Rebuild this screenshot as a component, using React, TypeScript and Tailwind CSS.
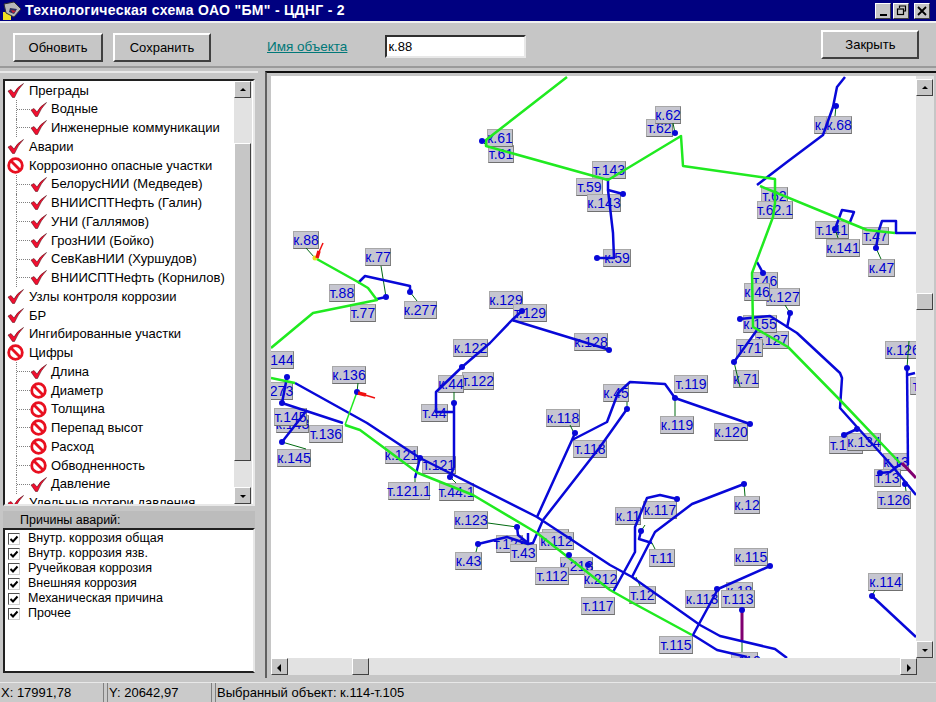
const font = "font-['Liberation_Sans',Arial,sans-serif]";
const raised = "border border-t-white border-l-white border-r-[#404040] border-b-[#404040] bg-[#c6c6c6]";

type TreeRow = { text: string; level: 0 | 1; off?: boolean };

const treeRows: TreeRow[] = [
  { text: "Преграды", level: 0 },
  { text: "Водные", level: 1 },
  { text: "Инженерные коммуникации", level: 1 },
  { text: "Аварии", level: 0 },
  { text: "Коррозионно опасные участки", level: 0, off: true },
  { text: "БелорусНИИ (Медведев)", level: 1 },
  { text: "ВНИИСПТНефть (Галин)", level: 1 },
  { text: "УНИ (Галлямов)", level: 1 },
  { text: "ГрозНИИ (Бойко)", level: 1 },
  { text: "СевКавНИИ (Хуршудов)", level: 1 },
  { text: "ВНИИСПТНефть (Корнилов)", level: 1 },
  { text: "Узлы контроля коррозии", level: 0 },
  { text: "БР", level: 0 },
  { text: "Ингибированные участки", level: 0 },
  { text: "Цифры", level: 0, off: true },
  { text: "Длина", level: 1 },
  { text: "Диаметр", level: 1, off: true },
  { text: "Толщина", level: 1, off: true },
  { text: "Перепад высот", level: 1, off: true },
  { text: "Расход", level: 1, off: true },
  { text: "Обводненность", level: 1, off: true },
  { text: "Давление", level: 1 },
  { text: "Удельные потери давления", level: 0 },
];

const causes = [
  "Внутр. коррозия общая",
  "Внутр. коррозия язв.",
  "Ручейковая коррозия",
  "Внешняя коррозия",
  "Механическая причина",
  "Прочее",
];

// text, left, top, width (page coordinates)
const labels: [string, number, number, number][] = [
  ["т.61", 488, 145, 26], ["к.61", 487, 129, 26],
  ["т.62", 646, 119, 27], ["к.62", 655, 106, 26],
  ["т.143", 592, 161, 34], ["т.59", 576, 178, 27], ["к.143", 587, 194, 34],
  ["к.59", 603, 249, 28], ["к.58", 814, 116, 27], ["к.68", 826, 116, 26],
  ["т.62", 761, 187, 27], ["т.62.1", 757, 201, 36],
  ["т.141", 815, 221, 34], ["к.141", 826, 239, 34], ["т.47", 862, 227, 27], ["к.47", 868, 259, 27],
  ["к.88", 293, 231, 26], ["к.77", 365, 248, 26], ["т.88", 329, 284, 26], ["т.77", 350, 304, 26], ["к.277", 404, 301, 33],
  ["к.129", 489, 291, 34], ["т.129", 513, 304, 34], ["к.128", 574, 333, 34], ["к.122", 453, 339, 35],
  ["т.46", 752, 272, 26], ["к.127", 766, 288, 34], ["к.46", 744, 283, 26],
  ["т.127", 755, 331, 34], ["к.155", 743, 315, 34], ["т.71", 736, 339, 27], ["к.71", 733, 370, 26],
  ["к.126", 885, 341, 36], ["т.12", 910, 377, 30],
  ["к.144", 260, 351, 34], ["к.136", 332, 366, 34], ["т.122", 462, 372, 32], ["к.44", 438, 375, 26], ["т.44", 421, 404, 27],
  ["к.273", 260, 382, 33], ["к.143", 276, 415, 33], ["т.145", 274, 408, 33], ["к.145", 277, 449, 34], ["т.136", 309, 425, 34],
  ["к.45", 603, 384, 26], ["т.119", 674, 375, 34], ["к.119", 660, 416, 34], ["к.120", 714, 423, 34],
  ["к.118", 546, 409, 34], ["т.118", 573, 440, 34],
  ["к.121", 385, 446, 33], ["т.121", 422, 456, 34], ["т.121.1", 388, 482, 42], ["т.44.1", 439, 483, 35],
  ["к.123", 454, 511, 34], ["к.43", 455, 552, 27], ["т.123", 496, 535, 27], ["т.43", 510, 544, 27],
  ["т.112", 542, 529, 27], ["к.112", 539, 532, 35], ["к.213", 560, 557, 33], ["к.212", 584, 570, 33], ["т.112", 535, 567, 34], ["т.117", 581, 597, 34],
  ["к.11", 615, 507, 26], ["к.117", 643, 501, 34], ["т.11", 649, 549, 26], ["т.12", 629, 586, 27], ["к.12", 734, 496, 26],
  ["к.115", 734, 548, 34], ["к.18", 726, 582, 27], ["к.113", 685, 590, 34], ["т.113", 721, 590, 34], ["т.115", 659, 636, 34], ["к.110", 731, 652, 27],
  ["к.114", 868, 573, 35], ["т.134", 829, 436, 34], ["к.134", 847, 433, 34], ["к.13", 883, 453, 26], ["т.13", 874, 469, 27], ["т.126", 877, 491, 34],
];

const leaders = [
  "306,248 315,258", "381,266 386,297", "417,301 410,292", "486,145 482,141", "673,123 675,133",
  "488,523 517,527", "675,416 675,398", "740,387 734,362", "785,305 790,313", "838,238 835,229",
  "881,259 876,248", "306,449 282,442", "358,383 357,392", "415,482 415,478", "456,483 450,477",
  "476,552 478,544", "574,433 570,425", "627,402 627,409", "645,525 641,531", "652,543 655,549",
  "636,577 640,586", "745,496 744,484", "875,590 872,596", "906,491 905,484", "742,640 742,652",
  "836,106 835,116", "909,341 907,368", "454,392 454,403",
];

const green = [
  "567,77 486,140 486,146 608,180 681,136 683,166 775,179 775,203 773,217 752,273 753,327 788,347 840,400 900,463",
  "760,186 867,230 895,233",
  "315,258 358,282 368,288 377,300 313,313 271,348",
  "271,378 295,383",
  "345,425 360,430 387,450 418,473 473,495 537,533 610,590 633,603 692,635",
];

const greenThin = ["357,392 345,425"];

const blue = [
  "845,77 837,87 833,107 823,135 787,162 757,185",
  "608,180 608,190 623,194", "608,190 613,233 614,258 597,258",
  "358,283 365,276 410,286 410,292", "377,299 386,297",
  "522,311 512,320 490,343 462,367 436,392 436,412 454,412", "454,403 454,467 450,477",
  "512,320 610,350",
  "295,383 367,423 420,458 537,517 610,565 632,577 700,625 720,636 775,649 787,658",
  "287,377 282,403 343,423", "307,410 282,442",
  "420,458 415,478",
  "537,517 572,440 607,422 618,393 630,382 665,384 675,398 750,424", "572,440 575,433",
  "543,520 600,447 627,409",
  "478,544 507,537 528,544 533,543 543,520", "517,527 518,535 528,543 528,533",
  "677,499 660,495 647,498 635,527 635,552 613,592",
  "744,484 692,504 655,532 632,577", "641,531 639,539 652,543",
  "770,566 718,589 693,635 717,650 747,657",
  "872,596 916,637",
  "740,319 770,316 797,333 840,373 842,378 840,408 857,427 893,467 916,495",
  "790,313 787,328", "763,273 757,262", "757,330 734,362",
  "844,435 857,429", "880,473 890,472 902,463",
  "907,368 908,465", "907,375 915,373",
  "835,229 842,210 854,212 850,222", "876,248 879,230 882,221 896,221 896,233 916,233",
  "482,141 487,141",
];

const dots = [
  [482, 141], [675, 133], [836, 106], [597, 258], [623, 194], [410, 292], [386, 297], [522, 311],
  [462, 367], [454, 403], [609, 350], [287, 377], [282, 403], [282, 442], [357, 392], [575, 433],
  [627, 409], [675, 398], [750, 424], [478, 544], [517, 527], [677, 499], [744, 484], [641, 531],
  [770, 566], [717, 589], [742, 610], [872, 596], [740, 319], [790, 313], [763, 273], [734, 362],
  [844, 435], [857, 429], [880, 473], [907, 368], [835, 229], [876, 248], [420, 458], [450, 477],
  [569, 555], [588, 565], [905, 484],
];

function CheckMark() {
  return (
    <svg width="17" height="15" viewBox="0 0 17 15" className="shrink-0">
      <path d="M1 8 L4 6.5 L7 10 Q10 4 16.5 0.5 Q11 6 7.5 14.5 L5.5 14.5 Z" fill="#f01030" stroke="#400008" strokeWidth="0.5" />
    </svg>
  );
}

function BanMark() {
  return (
    <svg width="17" height="17" viewBox="0 0 17 17" className="shrink-0">
      <circle cx="8.5" cy="8.5" r="6.8" fill="#fff" stroke="#e81020" strokeWidth="2.8" />
      <path d="M4 4 L13 13" stroke="#e81020" strokeWidth="2.8" />
    </svg>
  );
}

function Arrow({ dir }: { dir: "up" | "down" | "left" | "right" }) {
  const points = {
    up: "4,7 10,7 7,4",
    down: "4,5 10,5 7,8",
    left: "8,3 8,11 4,7",
    right: "5,3 5,11 9,7",
  }[dir];
  return (
    <svg width="14" height="14" viewBox="0 0 14 12">
      <polygon points={points} fill="#000" />
    </svg>
  );
}

function ScrollBtn({ dir }: { dir: "up" | "down" | "left" | "right" }) {
  return (
    <div className={`${raised} flex h-[17px] w-[17px] shrink-0 items-center justify-center`}>
      <Arrow dir={dir} />
    </div>
  );
}

function Button({ label, width }: { label: string; width: string }) {
  return (
    <button className={`${raised} ${width} h-[29px] border-2 border-r-[#303030] border-b-[#303030] text-[13px] text-black`}>
      {label}
    </button>
  );
}

function TreePanel() {
  return (
    <div className="mx-[3px] mt-[2px] flex h-[427px] border-2 border-t-[#202020] border-l-[#202020] border-r-[#e8e8e8] border-b-[#e8e8e8] bg-white pr-[1px]">
      <div className="h-full min-w-0 flex-1 overflow-hidden">
        {treeRows.map((row, i) => (
          <div key={i} className="flex h-[18.75px] items-center whitespace-nowrap text-[13px] text-black">
            {row.level === 1 && (
              <span className="ml-[11px] flex h-full w-[14px] shrink-0 items-center border-l border-dotted border-[#808080]">
                <span className="w-full border-t border-dotted border-[#808080]" />
              </span>
            )}
            <span className={row.level === 0 ? "ml-[2px] flex w-[22px] shrink-0" : "flex w-[21px] shrink-0"}>
              {row.off ? <BanMark /> : <CheckMark />}
            </span>
            {row.text}
          </div>
        ))}
      </div>
      <div className="flex w-[18px] shrink-0 flex-col bg-[#e2e2e2]">
        <ScrollBtn dir="up" />
        <div className="h-[45px]" />
        <div className={`${raised} h-[318px] w-[17px]`} />
        <div className="flex-1" />
        <ScrollBtn dir="down" />
      </div>
    </div>
  );
}

function CausesPanel() {
  return (
    <div className="mx-[3px] mt-[5px] flex h-[162px] flex-col">
      <div className="h-[17px] bg-[#bcbcbc] pl-[17px] text-[12.5px] leading-[18px] text-black">Причины аварий:</div>
      <div className="flex-1 border-2 border-t-[#202020] border-l-[#202020] border-r-[#e8e8e8] border-b-[#202020] bg-white pt-[1px]">
        {causes.map((c) => (
          <div key={c} className="flex h-[15px] items-center gap-[8px] pl-[3px] text-[12.5px] text-black">
            <span className="flex h-[12px] w-[12px] items-center justify-center border border-t-[#505050] border-l-[#505050] border-r-[#d0d0d0] border-b-[#d0d0d0] bg-white">
              <svg width="10" height="10" viewBox="0 0 10 10">
                <path d="M1.5 5 L4 7.5 L8.5 2.5" fill="none" stroke="#000" strokeWidth="2" />
              </svg>
            </span>
            {c}
          </div>
        ))}
      </div>
    </div>
  );
}

function MapCanvas() {
  return (
    <div className="relative h-[582px] w-[645px] overflow-hidden bg-white">
      {labels.map(([text, left, top, width], i) => (
        <div
          key={i}
          className="absolute flex h-[18px] items-center justify-center border border-[#a8a8a8] border-b-[#707070] border-r-[#808080] bg-[#c6c6d0] text-[14px] text-[#0000d0]"
          style={{ left: left - 271, top: top - 76, width }}
        >
          {text}
        </div>
      ))}
      <svg className="absolute inset-0" width="645" height="582" viewBox="271 76 645 582" fill="none">
        {leaders.map((p) => (
          <polyline key={p} points={p} stroke="#006a10" strokeWidth="1" />
        ))}
        {blue.map((p) => (
          <polyline key={p} points={p} stroke="#0808d8" strokeWidth="2.5" strokeLinejoin="round" />
        ))}
        {green.map((p) => (
          <polyline key={p} points={p} stroke="#20ea20" strokeWidth="2.5" strokeLinejoin="round" />
        ))}
        {greenThin.map((p) => (
          <polyline key={p} points={p} stroke="#20ea20" strokeWidth="1.5" />
        ))}
        <polyline points="742,610 742,640" stroke="#800070" strokeWidth="3" />
        <polyline points="902,463 916,478" stroke="#800070" strokeWidth="3" />
        {dots.map(([x, y]) => (
          <circle key={`${x}-${y}`} cx={x} cy={y} r="3" fill="#0808d8" />
        ))}
        <circle cx="315" cy="258" r="2.5" fill="#e8e020" />
        <polyline points="323,243 319,252" stroke="#f01010" strokeWidth="1.5" />
        <polyline points="319,251 317,258" stroke="#f01010" strokeWidth="3.5" />
        <polyline points="358,393 366,395" stroke="#f01010" strokeWidth="3.5" />
        <polyline points="365,395 375,398" stroke="#f01010" strokeWidth="1.5" />
      </svg>
    </div>
  );
}

function MapPanel() {
  return (
    <div className="ml-[7px] flex h-[607px] w-[671px] flex-col border-t-2 border-l-2 border-t-[#101010] border-l-[#606060] pl-[4px] pt-[3px]">
      <div className="flex">
        <MapCanvas />
        <div className="flex w-[18px] flex-col bg-[#e2e2e2] pt-[3px]">
          <ScrollBtn dir="up" />
          <div className="h-[197px]" />
          <div className={`${raised} h-[17px] w-[17px]`} />
          <div className="flex-1" />
          <ScrollBtn dir="down" />
        </div>
      </div>
      <div className="flex h-[17px] w-[663px] bg-[#e2e2e2]">
        <ScrollBtn dir="left" />
        <div className="w-[64px]" />
        <div className={`${raised} h-[17px] w-[17px]`} />
        <div className="flex-1" />
        <ScrollBtn dir="right" />
        <div className="w-[17px] bg-[#c6c6c6]" />
      </div>
    </div>
  );
}

export default function App() {
  return (
    <div className={`${font} flex h-[702px] w-[936px] flex-col overflow-hidden bg-[#c6c6c6]`}>
      {/* title bar */}
      <div className="flex h-[21px] items-center bg-[#000080] pl-[2px] pr-[6px]">
        <svg width="20" height="20" viewBox="0 0 20 20" className="shrink-0">
          <rect x="1" y="11" width="8" height="8" fill="#f0e020" />
          <path d="M2 3 L12 1 L19 8 L12 16 L4 12 Z" fill="#b8b8b8" stroke="#303030" />
          <path d="M8 7 L15 8 L12 13 L7 11 Z" fill="#303060" />
          <path d="M9 9 L14 10 L11 12 Z" fill="#d02030" />
        </svg>
        <span className="ml-[3px] flex-1 whitespace-nowrap text-[14px] font-bold tracking-[0.3px] text-white">
          Технологическая схема ОАО "БМ" - ЦДНГ - 2
        </span>
        <div className="flex items-center">
          <span className={`${raised} flex h-[16px] w-[16px] items-end justify-center pb-[2px]`}>
            <span className="h-[2px] w-[7px] bg-black" />
          </span>
          <span className={`${raised} ml-[2px] flex h-[16px] w-[16px] items-center justify-center`}>
            <svg width="11" height="11" viewBox="0 0 11 11" fill="none" stroke="#000">
              <path d="M3.5 3 V1 H9.5 V6 H7.5" strokeWidth="1.2" />
              <rect x="1.5" y="4" width="6" height="5.5" strokeWidth="1.2" />
            </svg>
          </span>
          <span className={`${raised} ml-[5px] flex h-[16px] w-[16px] items-center justify-center`}>
            <svg width="10" height="10" viewBox="0 0 10 10" stroke="#000" strokeWidth="1.8">
              <path d="M1 1 L9 9 M9 1 L1 9" />
            </svg>
          </span>
        </div>
      </div>

      {/* toolbar */}
      <div className="flex h-[47px] items-center border-t-2 border-b-2 border-t-[#f0f0f0] border-b-[#9a9a9a] pl-[13px]">
        <span className="mt-[6px] flex gap-[10px]">
          <Button label="Обновить" width="w-[90px]" />
          <Button label="Сохранить" width="w-[98px]" />
        </span>
        <span className="ml-[56px] mt-[6px] text-[13.5px] text-[#007878] underline">Имя объекта</span>
        <div className="ml-[38px] mt-[4px] flex h-[23px] w-[141px] items-center border-2 border-t-[#303030] border-l-[#303030] border-r-[#e8e8e8] border-b-[#e8e8e8] bg-white pl-[1px] text-[13px] text-black">
          к.88
        </div>
        <span className="ml-[295px]">
          <Button label="Закрыть" width="w-[98px]" />
        </span>
      </div>

      {/* main area */}
      <div className="flex flex-1 pt-[3px]">
        <div className="flex h-[607px] w-[258px] shrink-0 flex-col border-t-2 border-[#e8e8e8] bg-[#c6c6c6] pt-[4px]">
          <TreePanel />
          <CausesPanel />
        </div>
        <MapPanel />
      </div>

      {/* status bar */}
      <div className="flex h-[20px] items-center gap-[3px] border-t border-[#e8e8e8] bg-[#cacaca] text-[13px] text-black">
        <span className="w-[104px] border-r border-[#808080] pl-[1px]">X: 17991,78</span>
        <span className="w-[105px] border-x border-[#808080] pl-[1px]">Y: 20642,97</span>
        <span className="flex-1 border-l border-[#808080] pl-[1px]">Выбранный объект: к.114-т.105</span>
      </div>
    </div>
  );
}
